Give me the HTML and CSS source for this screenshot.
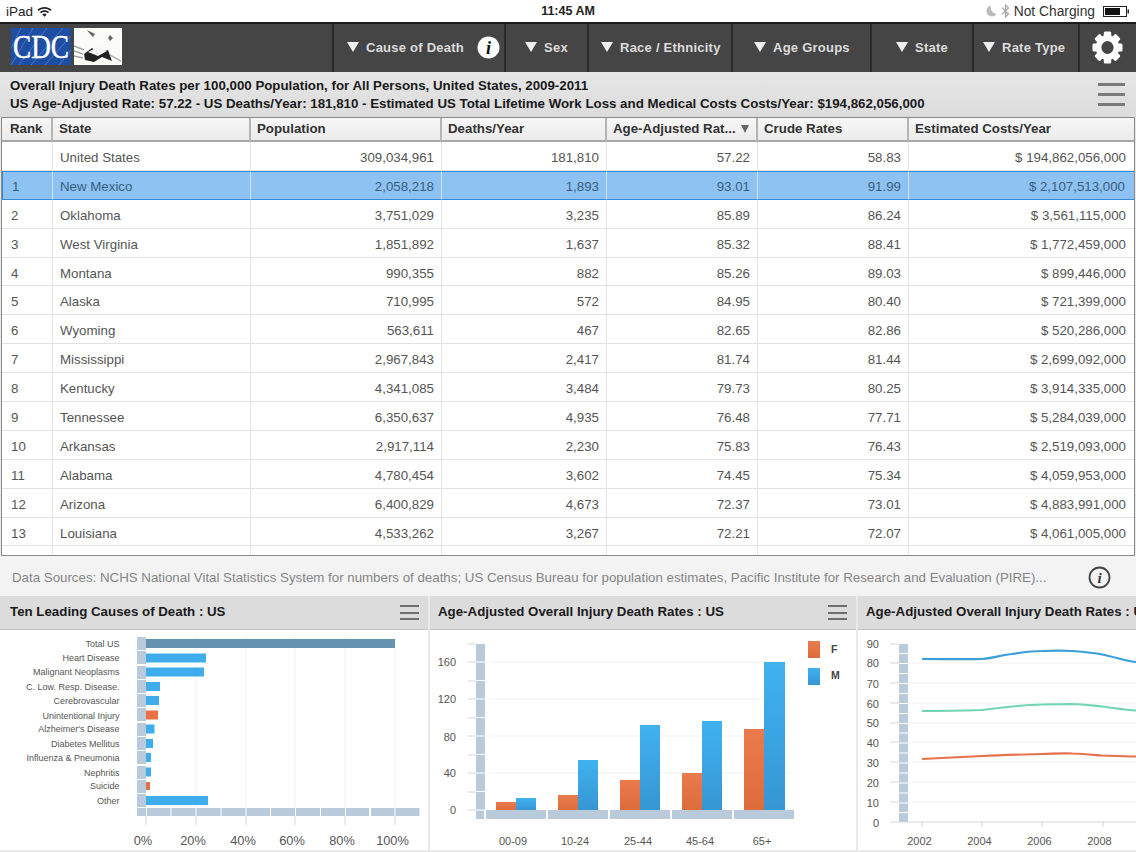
FILE: index.html
```html
<!DOCTYPE html>
<html lang="en">
<head>
<meta charset="utf-8">
<title>CDC WISQARS</title>
<link rel="stylesheet" href="styles.css">
</head>
<body>
<div class="status">
  <div class="status-left">
    <span>iPad</span>
    <svg class="wifi" width="15" height="11" viewBox="0 0 15 11"><path d="M0.5 3.6C4.4 0 10.6 0 14.5 3.6L13.3 4.9C10 1.9 5 1.9 1.7 4.9Z M2.9 6C5.5 3.6 9.5 3.6 12.1 6L10.9 7.3C9 5.5 6 5.5 4.1 7.3Z M5.3 8.4C6.5 7.3 8.5 7.3 9.7 8.4L7.5 10.8Z" fill="#222"/></svg>
  </div>
  <div class="status-time">11:45 AM</div>
  <div class="status-right">
    <svg width="11" height="12" viewBox="0 0 11 12"><path d="M5 0.5A5.5 5.5 0 1 0 10.5 9A6.5 6.5 0 0 1 5 0.5Z" fill="#bbb"/></svg>
    <svg width="9" height="14" viewBox="0 0 9 14"><path d="M1 3.8L7.5 10L4.5 13V1L7.5 4L1 10.2" fill="none" stroke="#aaa" stroke-width="1.3"/></svg>
    <span class="charging">Not Charging</span>
    <svg width="27" height="11" viewBox="0 0 27 11"><rect x="0.5" y="0.5" width="23" height="10" fill="#fff" stroke="#222"/><rect x="2" y="2" width="15" height="7" fill="#111"/><rect x="24.5" y="3.5" width="1.5" height="4" fill="#222"/></svg>
  </div>
</div>

<nav class="nav">
  <div class="brand">
    <svg class="cdc" width="60" height="37" viewBox="0 0 60 37">
      <rect width="60" height="37" fill="#1d4ea3"/>
      <path d="M0 37L22 0M8 37L36 0M20 37L52 0M34 37L60 8M48 37L60 22M0 20L10 0" stroke="#5d86c9" stroke-width="0.7"/>
      <text x="30" y="30" text-anchor="middle" class="cdc-text" textLength="56" lengthAdjust="spacingAndGlyphs">CDC</text>
    </svg>
    <svg class="sketch" width="48" height="37" viewBox="0 0 48 37">
      <rect width="48" height="37" fill="#fbfbf8"/>
      <path d="M13 2L21 6L19 9L16 6Z M36 7L39 10L36 13L34 10Z" fill="#666"/>
      <path d="M10 26L18 20L24 25L34 22L38 33L28 29L20 34L11 32Z" fill="#222"/>
      <path d="M14 24L24 19L33 23L24 28Z" fill="#f4f4f4"/>
      <path d="M0 18L10 22M0 23L9 26M0 28L9 30M36 27L47 33" stroke="#a5a5a5" stroke-width="1.4"/>
    </svg>
  </div>
  <div class="nav-item w-cause"><i class="tri"></i><span>Cause of Death</span>
    <svg class="nav-info" width="23" height="23" viewBox="0 0 23 23"><circle cx="11.5" cy="11.5" r="11" fill="#fff"/><text x="11.5" y="17.5" text-anchor="middle" class="i-glyph i-big">i</text></svg>
  </div>
  <div class="nav-item w-sex"><i class="tri"></i><span>Sex</span></div>
  <div class="nav-item w-race"><i class="tri"></i><span>Race / Ethnicity</span></div>
  <div class="nav-item w-age"><i class="tri"></i><span>Age Groups</span></div>
  <div class="nav-item w-state"><i class="tri"></i><span>State</span></div>
  <div class="nav-item w-rate"><i class="tri"></i><span>Rate Type</span></div>
  <div class="nav-gear">
    <svg width="31" height="33" viewBox="0 0 33 33" preserveAspectRatio="none"><g fill="#fff"><circle cx="16.5" cy="16.5" r="12.5"/><rect x="12.5" y="0.5" width="8" height="32" rx="1.5"/><rect x="12.5" y="0.5" width="8" height="32" rx="1.5" transform="rotate(45 16.5 16.5)"/><rect x="12.5" y="0.5" width="8" height="32" rx="1.5" transform="rotate(90 16.5 16.5)"/><rect x="12.5" y="0.5" width="8" height="32" rx="1.5" transform="rotate(135 16.5 16.5)"/></g><circle cx="16.5" cy="16.5" r="6.5" fill="#454545"/></svg>
  </div>
</nav>

<header class="summary">
  <div class="summary-text">
    <div>Overall Injury Death Rates per 100,000 Population, for All Persons, United States, 2009-2011</div>
    <div>US Age-Adjusted Rate: 57.22 - US Deaths/Year: 181,810 - Estimated US Total Lifetime Work Loss and Medical Costs Costs/Year: $194,862,056,000</div>
  </div>
  <div class="burger big"><i></i><i></i><i></i></div>
</header>

<div class="table-wrap">
<table class="data">
  <colgroup><col class="c1"><col class="c2"><col class="c3"><col class="c4"><col class="c5"><col class="c6"><col class="c7"></colgroup>
  <thead><tr><th>Rank</th><th>State</th><th>Population</th><th>Deaths/Year</th><th>Age-Adjusted Rat...<i class="sort"></i></th><th>Crude Rates</th><th>Estimated Costs/Year</th></tr></thead>
  <tbody>
    <tr><td></td><td>United States</td><td class="n">309,034,961</td><td class="n">181,810</td><td class="n">57.22</td><td class="n">58.83</td><td class="n">$ 194,862,056,000</td></tr>
    <tr class="sel"><td>1</td><td>New Mexico</td><td class="n">2,058,218</td><td class="n">1,893</td><td class="n">93.01</td><td class="n">91.99</td><td class="n">$ 2,107,513,000</td></tr>
    <tr><td>2</td><td>Oklahoma</td><td class="n">3,751,029</td><td class="n">3,235</td><td class="n">85.89</td><td class="n">86.24</td><td class="n">$ 3,561,115,000</td></tr>
    <tr><td>3</td><td>West Virginia</td><td class="n">1,851,892</td><td class="n">1,637</td><td class="n">85.32</td><td class="n">88.41</td><td class="n">$ 1,772,459,000</td></tr>
    <tr><td>4</td><td>Montana</td><td class="n">990,355</td><td class="n">882</td><td class="n">85.26</td><td class="n">89.03</td><td class="n">$ 899,446,000</td></tr>
    <tr><td>5</td><td>Alaska</td><td class="n">710,995</td><td class="n">572</td><td class="n">84.95</td><td class="n">80.40</td><td class="n">$ 721,399,000</td></tr>
    <tr><td>6</td><td>Wyoming</td><td class="n">563,611</td><td class="n">467</td><td class="n">82.65</td><td class="n">82.86</td><td class="n">$ 520,286,000</td></tr>
    <tr><td>7</td><td>Mississippi</td><td class="n">2,967,843</td><td class="n">2,417</td><td class="n">81.74</td><td class="n">81.44</td><td class="n">$ 2,699,092,000</td></tr>
    <tr><td>8</td><td>Kentucky</td><td class="n">4,341,085</td><td class="n">3,484</td><td class="n">79.73</td><td class="n">80.25</td><td class="n">$ 3,914,335,000</td></tr>
    <tr><td>9</td><td>Tennessee</td><td class="n">6,350,637</td><td class="n">4,935</td><td class="n">76.48</td><td class="n">77.71</td><td class="n">$ 5,284,039,000</td></tr>
    <tr><td>10</td><td>Arkansas</td><td class="n">2,917,114</td><td class="n">2,230</td><td class="n">75.83</td><td class="n">76.43</td><td class="n">$ 2,519,093,000</td></tr>
    <tr><td>11</td><td>Alabama</td><td class="n">4,780,454</td><td class="n">3,602</td><td class="n">74.45</td><td class="n">75.34</td><td class="n">$ 4,059,953,000</td></tr>
    <tr><td>12</td><td>Arizona</td><td class="n">6,400,829</td><td class="n">4,673</td><td class="n">72.37</td><td class="n">73.01</td><td class="n">$ 4,883,991,000</td></tr>
    <tr><td>13</td><td>Louisiana</td><td class="n">4,533,262</td><td class="n">3,267</td><td class="n">72.21</td><td class="n">72.07</td><td class="n">$ 4,061,005,000</td></tr>
    <tr><td></td><td></td><td></td><td></td><td></td><td></td><td></td></tr>
  </tbody>
</table>
</div>

<div class="sources">
  <span>Data Sources: NCHS National Vital Statistics System for numbers of deaths; US Census Bureau for population estimates, Pacific Institute for Research and Evaluation (PIRE)...</span>
  <svg width="23" height="23" viewBox="0 0 23 23"><circle cx="11.5" cy="11.5" r="10" fill="none" stroke="#444" stroke-width="1.8"/><text x="11.5" y="16.5" text-anchor="middle" class="i-glyph i-small">i</text></svg>
</div>

<section class="panels">
  <article class="panel p1">
    <div class="panel-head"><h2>Ten Leading Causes of Death : US</h2><div class="burger"><i></i><i></i><i></i></div></div>
    <svg class="chart" width="428" height="222" viewBox="0 630 428 222">
      <g class="grid"><path d="M196 636V808M246 636V808M295 636V808M345 636V808M395 636V808"/></g>
      <g class="band">
        <rect x="137" y="637" width="9" height="13"/><rect x="137" y="651" width="9" height="13"/><rect x="137" y="666" width="9" height="13"/><rect x="137" y="680" width="9" height="13"/><rect x="137" y="694" width="9" height="13"/><rect x="137" y="708" width="9" height="13"/><rect x="137" y="723" width="9" height="13"/><rect x="137" y="737" width="9" height="13"/><rect x="137" y="751" width="9" height="13"/><rect x="137" y="766" width="9" height="13"/><rect x="137" y="780" width="9" height="13"/><rect x="137" y="794" width="9" height="13"/>
        <rect x="137" y="808" width="9" height="8"/><rect x="147" y="808" width="23.500" height="8"/><rect x="171.500" y="808" width="24" height="8"/><rect x="196.500" y="808" width="24" height="8"/><rect x="221.500" y="808" width="24" height="8"/><rect x="246.500" y="808" width="23.500" height="8"/><rect x="271" y="808" width="24" height="8"/><rect x="296" y="808" width="24" height="8"/><rect x="321" y="808" width="24" height="8"/><rect x="346" y="808" width="23" height="8"/><rect x="371" y="808" width="23.500" height="8"/><rect x="395.500" y="808" width="24" height="8"/>
      </g>
      <rect x="146" y="639" width="249" height="9" fill="#6592b1"/>
      <g class="hb">
        <rect x="146" y="653.500" width="60" height="9"/><rect x="146" y="667.500" width="58" height="9"/><rect x="146" y="682" width="14" height="9"/><rect x="146" y="696" width="13" height="9"/><rect x="146" y="724.500" width="8.500" height="9"/><rect x="146" y="739" width="7" height="9"/><rect x="146" y="753" width="5" height="9"/><rect x="146" y="767.500" width="5" height="9"/><rect x="146" y="796" width="62" height="9"/>
      </g>
      <rect x="146" y="710.500" width="12" height="9" fill="#ec7046"/>
      <rect x="146" y="782" width="4" height="8" fill="#e0714a"/>
      <path class="tick" d="M146 816V825M196 816V825M246 816V825M295 816V825M345 816V825M395 816V825"/>
      <g class="cat">
        <text x="119.500" y="647">Total US</text><text x="119.500" y="661">Heart Disease</text><text x="119.500" y="675">Malignant Neoplasms</text><text x="119.500" y="690">C. Low. Resp. Disease.</text><text x="119.500" y="704">Cerebrovascular</text><text x="119.500" y="718.500">Unintentional Injury</text><text x="119.500" y="732">Alzheimer's Disease</text><text x="119.500" y="747">Diabetes Mellitus</text><text x="119.500" y="761">Influenza &amp; Pneumonia</text><text x="119.500" y="775.500">Nephritis</text><text x="119.500" y="789">Suicide</text><text x="119.500" y="804">Other</text>
      </g>
      <g class="pct">
        <text x="143" y="845">0%</text><text x="193" y="845">20%</text><text x="243" y="845">40%</text><text x="292" y="845">60%</text><text x="342" y="845">80%</text><text x="392.500" y="845">100%</text>
      </g>
    </svg>
  </article>

  <article class="panel p2">
    <div class="panel-head"><h2>Age-Adjusted Overall Injury Death Rates : US</h2><div class="burger"><i></i><i></i><i></i></div></div>
    <svg class="chart" width="426" height="222" viewBox="430 630 426 222">
      <defs>
        <linearGradient id="gb" x1="0" y1="0" x2="0" y2="1"><stop offset="0" stop-color="#40b2f0"/><stop offset="1" stop-color="#3596d3"/></linearGradient>
        <linearGradient id="go" x1="0" y1="0" x2="0" y2="1"><stop offset="0" stop-color="#ea7b4c"/><stop offset="1" stop-color="#dd6c3d"/></linearGradient>
      </defs>
      <path class="grid-line" d="M490 662H790M490 699H790M490 736H790M490 773H790"/>
      <g class="band">
        <rect x="476" y="644" width="9" height="17.500"/><rect x="476" y="662.500" width="9" height="17.500"/><rect x="476" y="681" width="9" height="17.500"/><rect x="476" y="699.500" width="9" height="17.500"/><rect x="476" y="718" width="9" height="17.500"/><rect x="476" y="736.500" width="9" height="17.500"/><rect x="476" y="755" width="9" height="17.500"/><rect x="476" y="773.500" width="9" height="17.500"/><rect x="476" y="792" width="9" height="17.500"/><rect x="476" y="810.500" width="8" height="8.500"/>
        <rect x="486" y="810" width="60" height="9"/><rect x="548" y="810" width="60" height="9"/><rect x="610" y="810" width="60" height="9"/><rect x="672" y="810" width="60" height="9"/><rect x="734" y="810" width="60" height="9"/>
      </g>
      <path class="tick" d="M468 644H476M468 662H476M468 681H476M468 699H476M468 718H476M468 736H476M468 755H476M468 773H476M468 792H476M468 810H476"/>
      <g fill="url(#go)">
        <rect x="496" y="802" width="20" height="8"/><rect x="558" y="795" width="20" height="15"/><rect x="620" y="780" width="20" height="30"/><rect x="682" y="773" width="20" height="37"/><rect x="744" y="729" width="20" height="81"/>
      </g>
      <g fill="url(#gb)">
        <rect x="516" y="798" width="20" height="12"/><rect x="578" y="760" width="20" height="50"/><rect x="640" y="725" width="20" height="85"/><rect x="702" y="721" width="20" height="89"/><rect x="764" y="662" width="21" height="148"/>
      </g>
      <rect x="808" y="641" width="12" height="17" fill="url(#go)"/>
      <rect x="808" y="668" width="12" height="17" fill="url(#gb)"/>
      <text x="831" y="652.500" class="legend">F</text><text x="831" y="679" class="legend">M</text>
      <g class="axis-y"><text x="456" y="666">160</text><text x="456" y="703">120</text><text x="456" y="741">80</text><text x="456" y="777">40</text><text x="456" y="814">0</text></g>
      <g class="axis-x"><text x="513" y="845">00-09</text><text x="575" y="845">10-24</text><text x="638" y="845">25-44</text><text x="700" y="845">45-64</text><text x="762" y="845">65+</text></g>
    </svg>
  </article>

  <article class="panel p3">
    <div class="panel-head"><h2>Age-Adjusted Overall Injury Death Rates : US</h2></div>
    <svg class="chart" width="278" height="222" viewBox="858 630 278 222">
      <path class="grid-line" d="M912 663H1136M912 683H1136M912 703H1136M912 723H1136M912 742H1136M912 762H1136M912 782H1136M912 802H1136"/>
      <g class="band">
        <rect x="899" y="644" width="9" height="9"/><rect x="899" y="654" width="9" height="9"/><rect x="899" y="664" width="9" height="9"/><rect x="899" y="674" width="9" height="9"/><rect x="899" y="684" width="9" height="9"/><rect x="899" y="694" width="9" height="9"/><rect x="899" y="704" width="9" height="9"/><rect x="899" y="714" width="9" height="9"/><rect x="899" y="724" width="9" height="8.500"/><rect x="899" y="733.500" width="9" height="9"/><rect x="899" y="743.500" width="9" height="9"/><rect x="899" y="753.500" width="9" height="9"/><rect x="899" y="763.500" width="9" height="9"/><rect x="899" y="773.500" width="9" height="9"/><rect x="899" y="783.500" width="9" height="9"/><rect x="899" y="793.500" width="9" height="9"/><rect x="899" y="803.500" width="9" height="8.500"/><rect x="899" y="813" width="9" height="9"/>
      </g>
      <path class="tick" d="M890 644H899M890 663H899M890 683H899M890 703H899M890 723H899M890 742H899M890 762H899M890 782H899M890 802H899M890 822H908H1136M922 822V827M982 822V827M1042 822V827M1103 822V827"/>
      <path class="ln" stroke="#3a9fd9" d="M922 659C945 659 965 659.500 982 659C995 658 1003 654.500 1012 654C1025 652 1035 651 1042 651C1055 650.500 1065 650.500 1072 651C1085 652 1095 653 1102 654.500C1115 657 1125 661 1136 662"/>
      <path class="ln" stroke="#71d4b2" d="M922 711C945 711 965 710.500 982 710C1005 707 1025 705 1042 704.500C1055 704 1065 704 1072 704C1085 704.500 1095 706 1102 706.500C1115 708 1125 710 1136 710.500"/>
      <path class="ln" stroke="#e6724c" d="M922 759C945 758 965 757 982 756C1005 755 1025 754.500 1042 754C1055 753.500 1065 753 1072 753.500C1085 754 1095 755 1102 755.500C1115 756 1125 756.500 1136 756.500"/>
      <g class="axis-y"><text x="879" y="648">90</text><text x="879" y="667">80</text><text x="879" y="688">70</text><text x="879" y="708">60</text><text x="879" y="727">50</text><text x="879" y="747">40</text><text x="879" y="767">30</text><text x="879" y="787">20</text><text x="879" y="807">10</text><text x="879" y="827">0</text></g>
      <g class="axis-x"><text x="919.500" y="845">2002</text><text x="979.500" y="845">2004</text><text x="1039.500" y="845">2006</text><text x="1099.500" y="845">2008</text></g>
    </svg>
  </article>
</section>
</body>
</html>
```

FILE: styles.css
```css
* { box-sizing: border-box; }
html, body { margin: 0; padding: 0; }
body {
  width: 1136px;
  height: 852px;
  overflow: hidden;
  background: #e9e9ea;
  font-family: "Liberation Sans", Arial, sans-serif;
}

/* status bar */
.status {
  height: 22px;
  background: #fff;
  display: flex;
  align-items: center;
  justify-content: space-between;
  padding: 0 6px;
  font-size: 13px;
  color: #222;
  position: relative;
}
.status-left, .status-right { display: flex; align-items: center; gap: 4px; }
.status-left span { font-size: 13.500px; }
.status-time {
  position: absolute;
  left: 0;
  right: 0;
  text-align: center;
  font-weight: bold;
  font-size: 12.500px;
}
.status-right { gap: 4px; padding-right: 0; }
.charging { font-size: 13.800px; margin: 0 4px 0 0; color: #333; }

/* nav */
.nav {
  height: 50px;
  background: #454545;
  border-top: 2px solid #1c1c1c;
  display: flex;
  color: #e8e8e8;
}
.brand {
  width: 332px;
  display: flex;
  gap: 3px;
  align-items: flex-start;
  padding: 4px 0 0 11px;
  flex: none;
}
.cdc { overflow: visible; }
.cdc-text {
  font-family: "Liberation Serif", serif;
  font-size: 34px;
  stroke: #fff;
  stroke-width: 0.5;
  fill: #fff;
}
.nav-item {
  height: 48px;
  border-left: 2px solid #2a2a2a;
  display: flex;
  align-items: center;
  font-size: 13px;
  font-weight: bold;
  letter-spacing: 0.24px;
  flex: none;
  padding-left: 13px;
  padding-bottom: 2px;
  color: #dcdcdc;
}
.tri {
  width: 0;
  height: 0;
  border-left: 6px solid transparent;
  border-right: 6px solid transparent;
  border-top: 10px solid #eee;
  margin-right: 7px;
  margin-top: -1px;
}
.nav-info { margin-left: 13px; }
.w-cause { width: 172px; }
.w-sex { width: 83px; padding-left: 19px; }
.w-race { width: 144px; padding-left: 12px; }
.w-age { width: 139px; padding-left: 21px; }
.w-state { width: 102px; padding-left: 24px; }
.w-rate { width: 106px; padding-left: 9px; }
.nav-gear {
  width: 58px;
  height: 48px;
  border-left: 2px solid #2a2a2a;
  display: flex;
  align-items: center;
  justify-content: center;
  padding: 0 2px 1px 0;
  flex: none;
}

/* summary */
.summary {
  height: 45px;
  background: linear-gradient(#e6e6e6, #dcdcdc);
  display: flex;
  align-items: center;
  justify-content: space-between;
  padding: 0 11px 0 10px;
}
.summary-text {
  font-size: 13.300px;
  font-weight: bold;
  color: #1a1a1a;
  line-height: 18px;
}
.burger { display: flex; flex-direction: column; justify-content: space-between; width: 19px; height: 15px; }
.burger i { display: block; height: 2px; background: #6d6d6d; }
.burger.big { width: 27px; height: 23px; margin-top: 0; }
.burger.big i { height: 3px; background: #7a7a7a; }

/* table */
.table-wrap {
  height: 439px;
  margin: 0 1px;
  border: 1px solid #8a8a8a;
  background: #fff;
  overflow: hidden;
}
.data {
  width: 1133px;
  table-layout: fixed;
  border-collapse: separate;
  border-spacing: 0;
  font-size: 13.300px;
  color: #555;
}
.c1 { width: 51px; }
.c2 { width: 198px; }
.c3 { width: 191px; }
.c4 { width: 165px; }
.c5 { width: 151px; }
.c6 { width: 151px; }
.c7 { width: 226px; }
.data th {
  height: 24px;
  padding: 0 0 2px 6px;
  text-align: left;
  font-size: 13.300px;
  color: #333;
  background: linear-gradient(#f7f7f7, #ececec);
  border-right: 2px solid #b5b5b5;
  border-bottom: 2px solid #a8a8a8;
  white-space: nowrap;
  overflow: hidden;
}
.data th:first-child { padding-left: 8px; }
.data th:last-child { border-right: 0; }
.sort {
  display: inline-block;
  margin-left: 5px;
  width: 0;
  height: 0;
  border-left: 4px solid transparent;
  border-right: 4px solid transparent;
  border-top: 8px solid #666;
}
.data td {
  height: 28.900px;
  padding: 3px 7px 0;
  border-right: 1px solid #e4e4e4;
  border-bottom: 1px solid #e2e2e2;
  white-space: nowrap;
}
.data td:first-child { padding-left: 9px; }
.data td:last-child { border-right: 0; padding-right: 9px; }
.data td.n { text-align: right; }
.sel td {
  background: #8dc2f3;
  color: #3a5f7c;
  border-top: 1px solid #2f8bd8;
  border-bottom: 1px solid #2f8bd8;
  border-right-color: #cfe4f8;
}
.sel td:first-child { border-left: 1px solid #2f8bd8; }
.sel td:last-child { border-right: 1px solid #2f8bd8; }

/* sources */
.sources {
  height: 40px;
  display: flex;
  align-items: center;
  justify-content: space-between;
  padding: 2px 25px 0 12px;
  background: #f3f3f4;
  font-size: 13.300px;
  color: #858585;
}
.i-glyph {
  font-family: "Liberation Serif", serif;
  font-weight: bold;
  font-style: italic;
}
.i-big { font-size: 18px; fill: #111; }
.i-small { font-size: 15px; fill: #333; }

/* panels */
.panels { display: flex; gap: 2px; height: 254px; overflow: hidden; }
.panel { flex: none; background: #fff; }
.p1 { width: 428px; }
.p2 { width: 426px; }
.p3 { width: 278px; }
.panel-head {
  height: 34px;
  background: #dcdcdd;
  border-bottom: 1px solid #c4c4c4;
  display: flex;
  align-items: center;
  justify-content: space-between;
  padding: 0 9px 0 10px;
  overflow: hidden;
}
.p2 .panel-head { padding-left: 8px; }
.p3 .panel-head { padding-left: 8px; }
h2 {
  margin: 0 0 2px;
  font-size: 13.300px;
  font-weight: bold;
  color: #1a1a1a;
  white-space: nowrap;
}
.chart { display: block; }
.chart text { font-family: "Liberation Sans", Arial, sans-serif; }
.grid path, .grid-line { fill: none; stroke: #f1f1f1; stroke-width: 1; }
.band rect { fill: #b9cadb; }
.hb rect { fill: #3fadec; }
.tick { fill: none; stroke: #d2d6da; stroke-width: 1; }
.cat text { font-size: 9px; fill: #555; text-anchor: end; }
.pct text { font-size: 12.800px; fill: #555; text-anchor: middle; }
.axis-y text { font-size: 11px; fill: #555; text-anchor: end; }
.axis-x text { font-size: 11px; fill: #555; text-anchor: middle; }
.legend { font-size: 10.500px; font-weight: bold; fill: #444; }
.ln { fill: none; stroke-width: 2.2; }
```
